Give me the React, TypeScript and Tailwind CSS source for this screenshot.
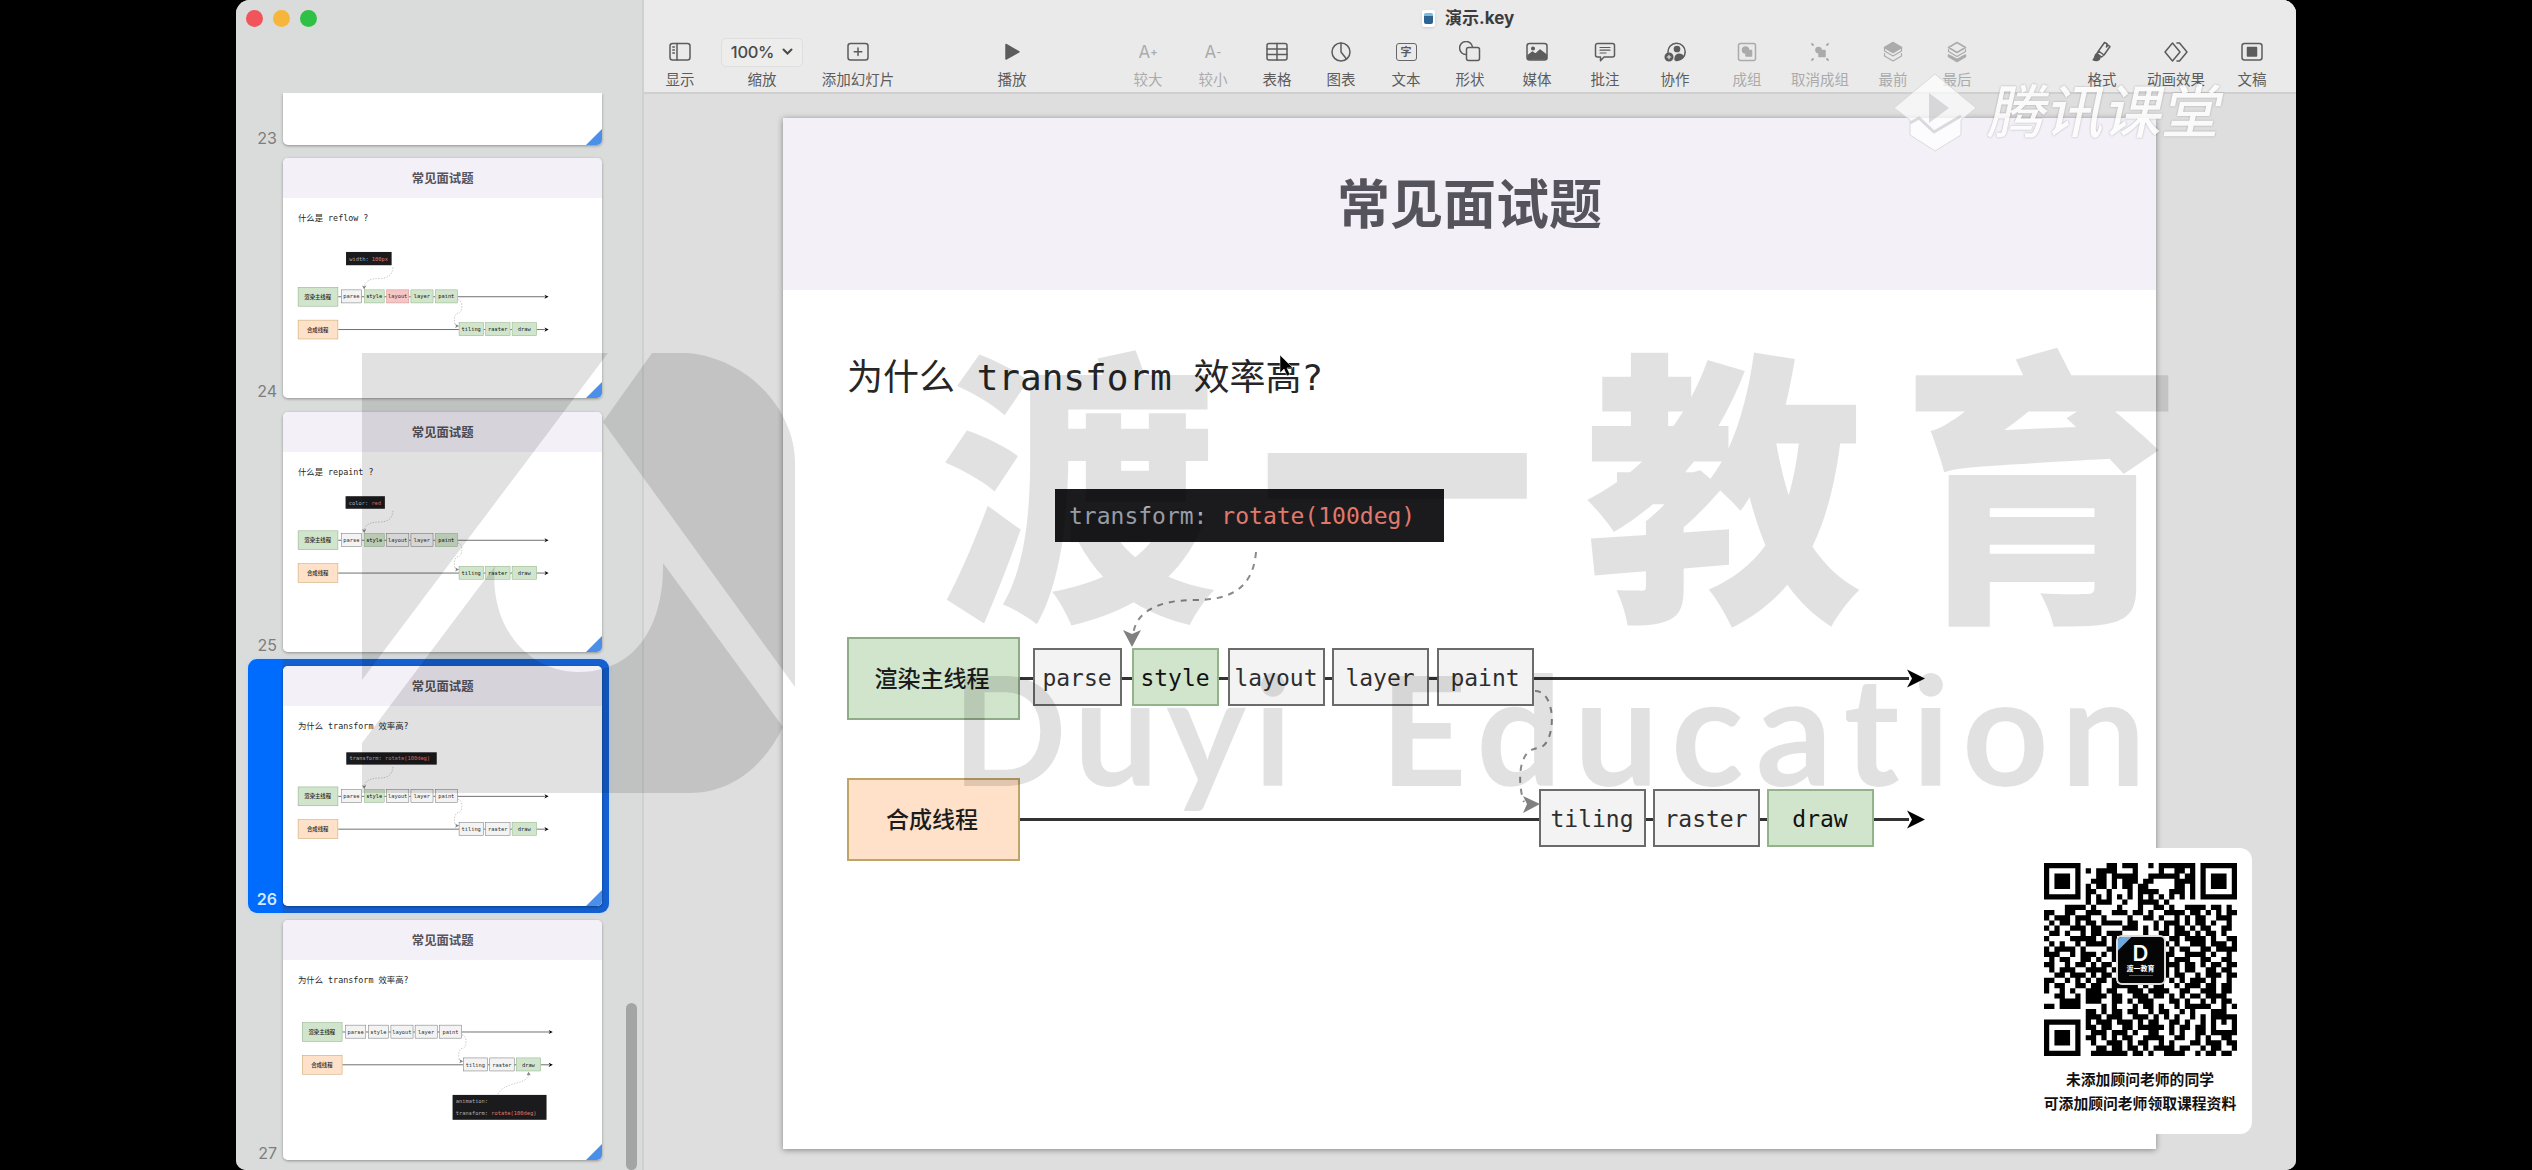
import React from "react";

const CJK = "font-['Inter','Noto_Sans_CJK_SC',sans-serif]";
const MONO = "font-['DejaVu_Sans_Mono','Noto_Sans_CJK_SC',monospace]";

/* ---------- toolbar ---------- */

const S = ({ children, w = 22 }: { children: React.ReactNode; w?: number }) => (
  <svg width={w} height="22" viewBox="0 0 22 22" fill="none" stroke="currentColor" strokeWidth="1.5" strokeLinejoin="round" strokeLinecap="round">
    {children}
  </svg>
);

const icons: Record<string, React.ReactNode> = {
  view: <S><rect x="1" y="2.5" width="20" height="16.5" rx="2.5" /><path d="M8 2.5v16.5M3.8 6h1.6M3.8 9h1.6M3.8 12h1.6" /></S>,
  add: <S><rect x="1" y="2.5" width="20" height="16.5" rx="2.5" /><path d="M11 7v7.5M7.2 10.8h7.6" /></S>,
  play: <S><path d="M5 3.5v14.5l13-7.2z" fill="currentColor" /></S>,
  table: <S><rect x="1" y="2.5" width="20" height="16.5" rx="2" /><path d="M1 8h20M1 13.5h20M11 2.5v16.5" /></S>,
  chart: <S><circle cx="11" cy="11" r="9" /><path d="M11 2v9l5.5 7" /></S>,
  shape: <S><path d="M7 13.5A6.5 6.5 0 1 1 13.5 6" /><rect x="7.5" y="6.5" width="13" height="13" rx="2" /></S>,
  media: <S><rect x="1" y="2.5" width="20" height="16.5" rx="2.5" /><path d="M2 18v-3.5l4.5-3.5 3 2.3L14 9l6.5 5v4z" fill="currentColor" /><circle cx="7" cy="7.5" r="1.3" fill="currentColor" /></S>,
  comment: <S><path d="M3.5 2.5h15a2 2 0 0 1 2 2V14a2 2 0 0 1-2 2H10l-3.5 3.8V16h-3a2 2 0 0 1-2-2V4.500a2 2 0 0 1 2-2z" /><path d="M6 6.500h10M6 9.200h10M6 12h6" strokeWidth="1.2" /></S>,
  collab: <S><path d="M4 11.500a8.600 8.600 0 1 1 8 8" /><circle cx="13" cy="8" r="2.600" fill="currentColor" /><path d="M11 18.800c0-8 8-6 8-3-2 3-5 3-8 3z" fill="currentColor" /><circle cx="5" cy="16" r="3.800" fill="currentColor" /><path d="M5 14.200v3.600M3.200 16h3.600" stroke="#eaeaea" strokeWidth="1.100" /></S>,
  group: <S><rect x="2.500" y="2.500" width="17" height="17" rx="2" /><circle cx="9.500" cy="9" r="3" fill="currentColor" /><rect x="10" y="9.500" width="5.500" height="5.500" fill="currentColor" /></S>,
  ungroup: <S><path d="M3 3l1 1M19 3l-1 1M3 19l1-1M19 19l-1-1" strokeWidth="2" /><circle cx="9.500" cy="9" r="2.600" fill="currentColor" /><rect x="10" y="9.500" width="6" height="6" fill="currentColor" /></S>,
  front: <S><path d="M2.500 6.500L11 1.500l8.500 5L11 11.500z" fill="currentColor" /><path d="M2.500 6.500v3.500l8.500 5 8.500-5v-3.500M2.500 12.500v2.500l8.500 5 8.500-5v-2.500" strokeWidth="1.200" /></S>,
  back: <S><path d="M2.500 6.500L11 1.500l8.500 5L11 11.500z" /><path d="M2.500 8.500v2l8.500 5 8.500-5v-2" strokeWidth="1.200" /><path d="M2.500 14l8.500 4.500 8.500-4.500v1.500L11 20.500l-8.500-5z" fill="currentColor" /></S>,
  format: <S><path d="M13.500 1.500l-6 8.500 5.500 4 6-8.500-2-1.500-1.500 2 .500-3.300zM7.500 10L6 12.500l4.500 3.500 2.500-2" /><path d="M6 12.800c-3 1-1 3.500-3.800 6 3 1.500 6.500.700 7-3z" fill="currentColor" /></S>,
  anim: <S w={26}><path d="M7.500 2L0 11l7.500 9 7.500-9z" /><path d="M12 2h2.500L22 11l-7.500 9H12" /></S>,
  doc: <S><rect x="1" y="2.500" width="20" height="16.500" rx="2.500" /><rect x="6.500" y="6.500" width="9" height="8.500" fill="currentColor" /></S>,
};

type Tool = { label: string; cell: string; icon?: string; dim?: boolean };
const tools: Tool[] = [
  { label: "显示", cell: "ml-[21px] w-[30px]", icon: "view" },
  { label: "缩放", cell: "ml-[26px] w-[82px]", icon: "zoom" },
  { label: "添加幻灯片", cell: "ml-[18px] w-[74px]", icon: "add" },
  { label: "播放", cell: "ml-[102px] w-[30px]", icon: "play" },
  { label: "较大", cell: "ml-[106px] w-[30px]", icon: "A+", dim: true },
  { label: "较小", cell: "ml-[35px] w-[30px]", icon: "A-", dim: true },
  { label: "表格", cell: "ml-[34px] w-[30px]", icon: "table" },
  { label: "图表", cell: "ml-[34px] w-[30px]", icon: "chart" },
  { label: "文本", cell: "ml-[35px] w-[30px]", icon: "text" },
  { label: "形状", cell: "ml-[34px] w-[30px]", icon: "shape" },
  { label: "媒体", cell: "ml-[37px] w-[30px]", icon: "media" },
  { label: "批注", cell: "ml-[38px] w-[30px]", icon: "comment" },
  { label: "协作", cell: "ml-[40px] w-[30px]", icon: "collab" },
  { label: "成组", cell: "ml-[42px] w-[30px]", icon: "group", dim: true },
  { label: "取消成组", cell: "ml-[28px] w-[60px]", icon: "ungroup", dim: true },
  { label: "最前", cell: "ml-[28px] w-[30px]", icon: "front", dim: true },
  { label: "最后", cell: "ml-[34px] w-[30px]", icon: "back", dim: true },
  { label: "格式", cell: "ml-[115px] w-[30px]", icon: "format" },
  { label: "动画效果", cell: "ml-[29px] w-[60px]", icon: "anim" },
  { label: "文稿", cell: "ml-[31px] w-[30px]", icon: "doc" },
];

function ToolIcon({ name }: { name: string }) {
  if (name === "zoom")
    return (
      <span className="flex h-[29px] w-[82px] items-center justify-center gap-2 rounded-[5px] border border-[#dfdfdf] bg-[#ededec] text-[16.500px] font-medium tracking-[-0.3px] text-[#4a4a4a]">
        100%
        <svg width="11" height="8" viewBox="0 0 11 8" fill="none" stroke="#4a4a4a" strokeWidth="2" strokeLinecap="round">
          <path d="M1.500 1.500l4 4 4-4" />
        </svg>
      </span>
    );
  if (name === "A+" || name === "A-")
    return (
      <span className="flex items-center text-[17px] leading-none">
        A<span className="text-[11px] font-semibold">{name[1]}</span>
      </span>
    );
  if (name === "text")
    return (
      <span className="flex h-[18px] w-[21px] items-center justify-center rounded-[3px] border-[1.500px] border-[#666] text-[11px] font-bold leading-none">字</span>
    );
  return <>{icons[name]}</>;
}

function Toolbar() {
  return (
    <header className="flex h-[94px] flex-col border-b-2 border-[#cfcfcf] bg-[#eaeaea]">
      <div className="flex h-9 items-center pl-[778px]">
        <span className="flex h-[17px] w-[13px] items-center justify-center rounded-[2px] bg-white shadow-sm">
          <span className="h-[11px] w-[9px] rounded-[2px] border-t-[3px] border-[#79b9dc] bg-[#2d6390]" />
        </span>
        <span className="ml-[10px] text-[17px] font-bold leading-none text-[#3c3c3e]">演示.key</span>
      </div>
      <div className="flex">
        {tools.map((t) => (
          <div key={t.label} className={`flex shrink-0 flex-col items-center ${t.cell} ${t.dim ? "text-[#ababab]" : "text-[#5c5c5c]"}`}>
            <div className="flex h-8 items-center justify-center">
              <ToolIcon name={t.icon!} />
            </div>
            <span className="mt-[3px] whitespace-nowrap text-[14.500px] leading-[18px]">{t.label}</span>
          </div>
        ))}
      </div>
    </header>
  );
}

/* ---------- slides ---------- */

type Fill = "plain" | "green" | "red";
type SlideData = {
  n: number;
  question: string;
  code: [string, string][];
  box: { x: number; y: number; w: number; h: number };
  dx: number;
  dy: number;
  fills: Fill[];
  below?: boolean;
};

const steps = [
  { t: "parse", x: 250, y: 530, w: 89 },
  { t: "style", x: 349, y: 530, w: 87 },
  { t: "layout", x: 445, y: 530, w: 97 },
  { t: "layer", x: 549, y: 530, w: 97 },
  { t: "paint", x: 654, y: 530, w: 97 },
  { t: "tiling", x: 756, y: 671, w: 107 },
  { t: "raster", x: 870, y: 671, w: 107 },
  { t: "draw", x: 984, y: 671, w: 107 },
];

const fillClass: Record<Fill, string> = {
  plain: "bg-[#f3f3f3] border-[#6b6b6b] text-[#2e2e2e]",
  green: "bg-[#d1e5cd] border-[#93b48a] text-[#111]",
  red: "bg-[#f5c6c6] border-[#cf9090] text-[#5a2020]",
};

function Slide({ s }: { s: SlideData }) {
  return (
    <div className={`relative h-[1031px] w-[1373px] bg-white ${MONO}`}>
      <div className="flex h-[172px] items-center justify-center bg-[#f3f0f8] pt-0.5">
        <h1 className="text-[53px] font-bold leading-none text-[#55535b]">常见面试题</h1>
      </div>
      <p className="whitespace-pre pl-[64px] pt-[62px] text-[36px] leading-[52px] text-[#262626]">{s.question}</p>

      <div className="absolute inset-0" style={{ transform: `translate(${s.dx}px, ${s.dy}px)` }}>
        <svg className="absolute inset-0" width="1373" height="1031" fill="none">
          <path d="M237 560.500H1126M237 701.500H1126" stroke="#333" strokeWidth="3" />
          <path d="M1142 560.500l-18-9 5 9-5 9zM1142 701.500l-18-9 5 9-5 9z" fill="#000" />
        </svg>
        <div className="absolute left-[64px] top-[519px] flex h-[83px] w-[173px] items-center justify-center border-2 border-[#8fab87] bg-[#d1e5cd] pr-[3px] pt-0.5 text-[23px] font-medium text-[#1c1c1c]">渲染主线程</div>
        <div className="absolute left-[64px] top-[660px] flex h-[83px] w-[173px] items-center justify-center border-2 border-[#bfa468] bg-[#fee1c8] pr-[3px] pt-0.5 text-[23px] font-medium text-[#1c1c1c]">合成线程</div>
        {steps.map((b, i) => (
          <div
            key={b.t}
            className={`absolute flex h-[58px] items-center justify-center border-2 pr-px pt-[3px] text-[23px] ${fillClass[s.fills[i]]}`}
            style={{ left: b.x, top: b.y, width: b.w }}
          >
            {b.t}
          </div>
        ))}
        <svg className="absolute inset-0" width="1373" height="1031" fill="none">
          <g stroke="#8a8a8a" strokeWidth="2" strokeDasharray="6 6">
            {!s.below && <path d="M473 434C470 470 448 482 412 482C378 482 352 492 350 518" />}
            <path d="M752 573C775 573 773 629 755 630C732 632 736 672 741 684" />
            {s.below && <path d="M1038 745C1030 790 935 770 905 830" />}
          </g>
          {!s.below && <path d="M349 529l-9-17 9 4 9-4z" fill="#808080" />}
          <path d="M757 686l-17-8 4 8-4 9z" fill="#808080" />
          {s.below && <path d="M1038 731l-9 17 9-4 9 4z" fill="#808080" />}
        </svg>
      </div>

      <div
        className="absolute flex flex-col justify-around bg-[#1b1b1d] pl-[14px] pt-0.5 text-[23px] leading-none"
        style={{ left: s.box.x, top: s.box.y, width: s.box.w, height: s.box.h }}
      >
        {s.code.map(([a, b]) => (
          <div key={a} className="whitespace-pre text-[#a9b1bd]">
            {a} <span className="text-[#e0796c]">{b}</span>
          </div>
        ))}
      </div>
    </div>
  );
}

const P: Fill = "plain";
const G: Fill = "green";
const slides: SlideData[] = [
  { n: 24, question: "什么是 reflow ?", code: [["width:", "100px"]], box: { x: 271, y: 404, w: 196, h: 57 }, dx: 0, dy: 36, fills: [P, G, "red", G, G, G, G, G] },
  { n: 25, question: "什么是 repaint ?", code: [["color:", "red"]], box: { x: 269, y: 362, w: 169, h: 54 }, dx: 0, dy: -9, fills: [P, G, P, P, G, G, G, G] },
  { n: 26, question: "为什么 transform 效率高?", code: [["transform:", "rotate(100deg)"]], box: { x: 272, y: 371, w: 389, h: 53 }, dx: 0, dy: 0, fills: [P, G, P, P, P, P, P, G] },
  { n: 27, question: "为什么 transform 效率高?", code: [["animation:", ""], ["transform:", "rotate(100deg)"]], box: { x: 729, y: 752, w: 404, h: 107 }, dx: 18, dy: -79, fills: [P, P, P, P, P, P, P, G], below: true },
];

function Corner() {
  return <span className="absolute bottom-0 right-0 size-4 bg-[#4b8fe9] [clip-path:polygon(100%_0,100%_100%,0_100%)]" />;
}

function Sidebar() {
  return (
    <aside className="flex w-[408px] shrink-0 flex-col border-r-2 border-[#cfd0d0] bg-[#dadcdb]">
      <div className="flex h-[93px] gap-[10px] pl-[10px] pt-[10px]">
        <span className="size-[17px] rounded-full bg-[#f1545a]" />
        <span className="size-[17px] rounded-full bg-[#f6b63c]" />
        <span className="size-[17px] rounded-full bg-[#2fc046]" />
      </div>
      <div className="flex h-[1077px] overflow-hidden pl-3">
        <div className="w-[361px]">
          <div className="flex h-[58px] items-start pr-[7px]">
            <div className="flex h-[52px] w-[29px] items-end justify-end text-[16px] leading-[14px] text-[#7d7d7d]">23</div>
            <div className="relative ml-[6px] h-[52px] w-[319px] overflow-hidden rounded-b-[5px] bg-white shadow-[0_1px_3px_rgba(0,0,0,0.35)]">
              <Corner />
            </div>
          </div>
          {slides.map((s) => {
            const on = s.n === 26;
            return (
              <div key={s.n} className={`flex h-[254px] py-[7px] ${on ? "rounded-[9px] bg-[linear-gradient(90deg,#006cfe_34px,#1460d0_35px)] shadow-[0_0_4px_#b5d3fb]" : ""}`}>
                <div className={`flex w-[29px] items-end justify-end text-[16px] leading-[14px] ${on ? "font-semibold text-[#d3e9ff]" : "text-[#7d7d7d]"}`}>{s.n}</div>
                <div className="relative ml-[6px] h-[240px] w-[319px] overflow-hidden rounded-[5px] bg-white shadow-[0_1px_3px_rgba(0,0,0,0.35)]">
                  <div className="origin-top-left scale-[0.2326]">
                    <Slide s={s} />
                  </div>
                  <Corner />
                </div>
              </div>
            );
          })}
        </div>
        <div className="ml-[17px] mt-[910px] h-[167px] w-[11px] rounded-full bg-[#a3a5a4]" />
      </div>
    </aside>
  );
}

/* ---------- QR card ---------- */

const qrMid = [
  "....##.###..#.#######", "#.####...#....#..##.#", "..##.#####..######.##", ".###.#.###.##....####",
  "#.##.#.##.##.....##.#", "##..#...#.####..###.#", "#.#.#.#.#.#.#.#.#.#.#", "#.###..#..####.#.....",
];
const qrRows = [
  "....####.#....#...#..##.#..####.##.#.", "##..##..###..###.##.#..####.##.#.#.##", "#.###.###..#....#..##.#..#.#.##..###.",
  ".#.##.#.##.####.##...#.###.#.##.#..#.", "#.#..###.##....###.#.#.#.##.#.##..##.", ".##.#..#.##.###....#..##.###.#.##.#..",
  "#....#####.#.#..........##.####.#..##", ".#.#..#.####.#.........#.#..###.###.#", "#.####.#....##..........#.##..##.####",
  "###..#.###.#.#.........##..####.#..#.", ".#.##..##.#..#.........#.###..##..##.", "##..#.##.#.##..........###.##.#.##.##",
  ".#.###..####.#.........#.#.##..##.##.", "..##.###.#.##..........#.##..#.###.##", "##..#.#.#.##.#..........#.#.###.#..#.",
  "#.##..##.##..#####.#.##..#.###.##.##.", "#..#.#..###.##..###.####..##..###.##.", "..##..#.####.##..###.##.#.#.##.####..",
  "...####.###..##.#.###...##.#..#.#.##.", "##.####....#.#...#.##.#..#.#####..#.#", "........##.#.##.##..#.##..#.#...###..",
];
const qrBottom = [
  "###.###..###.#.#.#..#.#.#####", "#.###.###.#.##..##.#..#.#.#.#", "##.##..##.#####.#.##.##.#...#.#", ".###.###.#..##..#.#..##.######.",
  "##.#.#.##..####..##..#.#..##.###", ".#..###.#.##..#.#...##.###.##.#", "..##.##.##.#.####.##..#.##..#..#", ".#######.##.#..####..#.##.##.##",
];
const dark = (r: number, c: number) => {
  const fr = r < 7 ? r : r > 29 ? r - 30 : -1;
  const fc = c < 7 ? c : c > 29 ? c - 30 : -1;
  if (fr >= 0 && fc >= 0 && !(r > 29 && c > 29)) {
    const d = Math.max(Math.abs(fr - 3), Math.abs(fc - 3));
    return d === 3 || d <= 1;
  }
  if (r < 8) return c > 7 && c < 29 && qrMid[r][c - 8] === "#";
  if (r < 29) return qrRows[r - 8][c] === "#";
  return c > 7 && qrBottom[r - 29][c - 8] === "#";
};
let qrPath = "";
for (let r = 0; r < 37; r++) for (let c = 0; c < 37; c++) if (dark(r, c)) qrPath += `M${c} ${r}h1v1h-1z`;

function QrCard() {
  return (
    <div className="absolute left-[1792px] top-[848px] flex h-[286px] w-[224px] flex-col items-center rounded-[12px] bg-white pt-[15px]">
      <div className="relative">
        <svg width="193" height="193" viewBox="0 0 37 37">
          <path d={qrPath} fill="#000" />
        </svg>
        <div className="absolute left-[72px] top-[72px] flex size-[50px] flex-col items-center overflow-hidden rounded-[6px] border-2 border-[#dcdcdc] bg-[#050505] text-white">
          <span className="absolute left-0 top-0 size-3.5 bg-[#6da8df] [clip-path:polygon(0_0,100%_0,0_100%)]" />
          <span className="mt-[5px] text-[22px] font-semibold leading-[22px]">D</span>
          <span className="text-[7px] font-bold leading-[9px]">渡一教育</span>
          <span className="mt-0.5 h-px w-6 bg-[#555]" />
        </div>
      </div>
      <p className="mt-[13px] text-center text-[14.800px] font-bold leading-[23.500px] text-[#111]">
        未添加顾问老师的同学
        <br />
        可添加顾问老师领取课程资料
      </p>
    </div>
  );
}

/* ---------- overlays ---------- */

function SchoolWatermark() {
  return (
    <svg className="pointer-events-none absolute left-0 top-0" width="2060" height="1170" viewBox="236 0 2060 1170">
      <g fill="#000" fillOpacity="0.118">
        <path d="M362 353H608L362 680Z" />
        <path d="M362 743L495 566C489 622 524 672 579 672C632 672 664 630 663 563L783 727C762 770 728 793 690 793H362Z" />
        <path d="M652 353H687C748 358 795 410 795 463V687L603 422Z" />
        <g className="font-['Noto_Sans_CJK_SC',sans-serif] text-[288px] font-black">
          <text x="939" y="599" textLength="278" lengthAdjust="spacingAndGlyphs">渡</text>
          <text x="1258" y="588" textLength="278" lengthAdjust="spacingAndGlyphs">一</text>
          <text x="1585" y="599" textLength="278" lengthAdjust="spacingAndGlyphs">教</text>
          <text x="1901" y="599" textLength="282" lengthAdjust="spacingAndGlyphs">育</text>
        </g>
        <g className="font-['Lato','Open_Sans',sans-serif] text-[151px] font-bold [font-variant-ligatures:none]">
          <text x="952" y="786" textLength="340">Duyi</text>
          <text x="1380" y="786" textLength="766">Education</text>
        </g>
      </g>
    </svg>
  );
}

function PlatformWatermark() {
  return (
    <div className="pointer-events-none absolute left-[1657px] top-[72px] flex items-center opacity-85">
      <svg width="84" height="79" viewBox="0 0 84 79">
        <path d="M42 1L83 35L68 47V62L42 78L17 62V47L1 35Z" fill="#fff" fillOpacity="0.850" stroke="#d8d8d8" />
        <path d="M36 20L56 35L36 50Z" fill="#d6d6da" />
        <path d="M17 50L26 45L41 59L68 43" fill="none" stroke="#d6d6da" strokeWidth="3" />
      </svg>
      <span className="ml-[14px] -skew-x-12 text-[58px] font-medium leading-[80px] text-white [text-shadow:0_0_2px_rgba(0,0,0,0.35)]">腾讯课堂</span>
    </div>
  );
}

export default function App() {
  return (
    <div className={`flex h-[1170px] w-[2532px] justify-center overflow-hidden bg-black pr-0 ${CJK}`}>
      <div className="relative flex h-[1170px] w-[2060px] overflow-hidden rounded-b-[10px] rounded-t-[14px] bg-[#dedede]">
        <Sidebar />
        <main className="flex min-w-0 flex-1 flex-col bg-[#dedede]">
          <Toolbar />
          <div className="pl-[139px] pt-6">
            <div className="w-[1373px] shadow-[0_1px_6px_rgba(0,0,0,0.4)]">
              <Slide s={slides[2]} />
            </div>
          </div>
        </main>
        <SchoolWatermark />
        <QrCard />
        <PlatformWatermark />
        <svg className="absolute left-[1043px] top-[354px]" width="16" height="24" viewBox="0 0 16 24">
          <path d="M1 1v18l4-4 3 7 3-1.500-3-6.500h6z" fill="#000" stroke="#fff" strokeOpacity="0.500" strokeWidth="1" />
        </svg>
      </div>
    </div>
  );
}
